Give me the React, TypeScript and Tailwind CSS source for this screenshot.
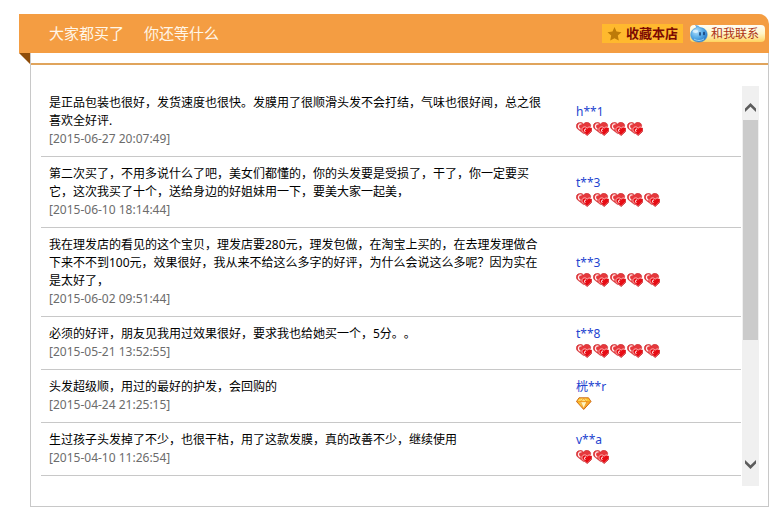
type Review = {
  text: string
  date: string
  user: string
  hearts: number
}

// hearts: 0 means the buyer has reached the diamond level
const reviews: Review[] = [
  {
    text: '是正品包装也很好，发货速度也很快。发膜用了很顺滑头发不会打结，气味也很好闻，总之很喜欢全好评.',
    date: '2015-06-27 20:07:49',
    user: 'h**1',
    hearts: 4,
  },
  {
    text: '第二次买了，不用多说什么了吧，美女们都懂的，你的头发要是受损了，干了，你一定要买它，这次我买了十个，送给身边的好姐妹用一下，要美大家一起美，',
    date: '2015-06-10 18:14:44',
    user: 't**3',
    hearts: 5,
  },
  {
    text: '我在理发店的看见的这个宝贝，理发店要280元，理发包做，在淘宝上买的，在去理发理做合下来不不到100元，效果很好，我从来不给这么多字的好评，为什么会说这么多呢？因为实在是太好了，',
    date: '2015-06-02 09:51:44',
    user: 't**3',
    hearts: 5,
  },
  {
    text: '必须的好评，朋友见我用过效果很好，要求我也给她买一个，5分。。',
    date: '2015-05-21 13:52:55',
    user: 't**8',
    hearts: 5,
  },
  {
    text: '头发超级顺，用过的最好的护发，会回购的',
    date: '2015-04-24 21:25:15',
    user: '桄**r',
    hearts: 0,
  },
  {
    text: '生过孩子头发掉了不少，也很干枯，用了这款发膜，真的改善不少，继续使用',
    date: '2015-04-10 11:26:54',
    user: 'v**a',
    hearts: 2,
  },
]

function Heart() {
  return (
    <svg width="16" height="14" viewBox="0 0 16 14">
      <path
        d="M7.6 11.6 1.4 6.8C-.2 5 .1 2.2 2 1 4 0 6.300.3 7.600 2 9 .2 11.300-.1 13.200 1c1.800 1.200 2 4 .2 5.800z"
        fill="#e6383c"
        stroke="#c8282c"
        strokeWidth=".6"
      />
      <path d="M5 1.900C2.200 1.900 1.300 5.200 4 7" fill="none" stroke="#ffeaea" strokeWidth="1.300" strokeLinecap="round" />
      <path
        d="M11.200 13.300 6.800 9.700C5.600 8.400 5.700 6.100 7.100 5.300c1.400-.8 3.100-.4 4.100.8 1-1.200 2.600-1.500 3.800-.6 1.200 1 1.200 2.900 0 4.200z"
        fill="#e80c14"
        stroke="#ffc4c4"
        strokeWidth=".9"
      />
      <path d="M7.600 10.400l3.600 3 3.900-3.600c.9-1 1-2.300.3-3.600" fill="none" stroke="#c4141a" strokeWidth=".9" />
      <path d="M9.800 6.900c-1.600-.1-1.900 1.700-.8 2.700" fill="none" stroke="#fff" strokeWidth="1" strokeLinecap="round" />
    </svg>
  )
}

function Diamond() {
  return (
    <svg width="16" height="14" viewBox="0 0 16 14">
      <path d="M3 .8h9.500L15 4.500 7.700 12.500.5 4.500z" fill="#ffc42a" />
      <path d="M4 5h6.800L7.700 11.500z" fill="#fff6c0" />
      <path d="M4.500 1.500h5.600L11 4H4.600z" fill="#ffe27a" />
      <path d="M1.500 4.200 3.500 1.500 5 4z" fill="#ffd95a" />
      <path d="M11 5h3.500L8.500 12z" fill="#fbab2c" />
      <path
        d="M.8 4.700h14M4.500 4.700l3.200-3.200 3.200 3.200M4.500 4.700l3.200 7M10.900 4.700l-3.200 7"
        fill="none"
        stroke="#e8861c"
        strokeWidth=".7"
      />
      <path d="M3 .8h9.500L15 4.500 7.700 12.500.5 4.500z" fill="none" stroke="#c8600c" strokeWidth=".9" />
    </svg>
  )
}

function Star() {
  return (
    <svg width="15" height="14" viewBox="0 0 14 14">
      <path d="M7 0l2 4.600 5 .6-3.700 3.400 1 5L7 11.200l-4.300 2.400 1-5L0 5.200l5-.6z" fill="#bd7a08" />
    </svg>
  )
}

function WangWang() {
  return (
    <svg width="18" height="18" viewBox="0 0 18 18">
      <defs>
        <radialGradient id="drop" cx=".35" cy=".35" r=".75">
          <stop offset="0" stopColor="#b5e0fa" />
          <stop offset=".5" stopColor="#5aaee8" />
          <stop offset="1" stopColor="#2474c4" />
        </radialGradient>
      </defs>
      <path
        d="M5.500.5c2.300.2 3.800 1 4.300 2.100 4.400.2 7.400 2.900 7.400 6.900 0 4.500-3.600 7.500-8.300 7.500S.7 14 .7 9.600C.7 6.300 2.800 3.900 6 3 6.800 2.200 6.500 1.300 5.500.5z"
        fill="url(#drop)"
        stroke="#3c8fd6"
        strokeWidth=".6"
      />
      <ellipse cx="5.500" cy="6.300" rx="2.800" ry="1.600" fill="#e3f5ff" opacity=".8" />
      <path d="M10 7.800v2.200M14 7.400v2.200" stroke="#0b2f66" strokeWidth="1.400" strokeLinecap="round" />
      <path d="M4 14c3 2 7 2 10-.2" fill="none" stroke="#9ad6f8" strokeWidth="1" />
    </svg>
  )
}

function Arrow({ d }: { d: string }) {
  return (
    <svg width="11" height="9" viewBox="0 0 11 9">
      <path d={d} fill="#5c5c5c" />
    </svg>
  )
}

function Header() {
  return (
    <header className="flex h-[39px] items-center justify-between rounded-tr-[10px] bg-[#f49d42] pl-[30px] pr-1">
      <h1 className="flex gap-5 text-[15px] text-[#fff6e8]">
        <span>大家都买了</span>
        <span>你还等什么</span>
      </h1>
      <div className="flex items-center gap-[7px]">
        <a href="#favorite" className="flex h-[19px] items-center gap-1 bg-[#ffb92e] px-[5px] text-[13px] font-bold text-[#7c0a02]">
          <Star />
          收藏本店
        </a>
        <a
          href="#contact"
          className="flex h-[17px] items-center gap-[3px] rounded-sm bg-linear-to-b from-[#fffdf5] via-[#fff6c8] to-[#ffd45c] pr-[6px] text-[12px] text-[#ad3216]"
        >
          <WangWang />
          和我联系
        </a>
      </div>
    </header>
  )
}

function ReviewRow({ review }: { review: Review }) {
  return (
    <tr className="border-b border-[#c8c8c8]">
      <td className="w-3/4 py-2 pl-2 pr-6 text-black">
        <p>{review.text}</p>
        <p className="text-[#6c6c6c]">[{review.date}]</p>
      </td>
      <td className="py-2 pl-[10px] align-middle">
        <a href="#buyer" className="block text-[#2343cf]">
          {review.user}
        </a>
        <div className="flex h-[18px] items-start gap-px pt-px">
          {review.hearts === 0 ? <Diamond /> : Array.from({ length: review.hearts }, (_, i) => <Heart key={i} />)}
        </div>
      </td>
    </tr>
  )
}

function ScrollBar() {
  return (
    <div className="flex w-[17px] flex-col bg-[#f0f0f0]">
      <button aria-label="向上滚动" className="flex h-[34px] items-center justify-center pt-2">
        <Arrow d="M5.500 0 11 5.500V9L5.500 3.800 0 9V5.500z" />
      </button>
      <div className="mx-px h-[220px] bg-[#cbcbcb]" />
      <button aria-label="向下滚动" className="mt-auto flex h-[44px] items-center justify-center">
        <Arrow d="M5.500 9 0 3.500V0l5.500 5.200L11 0v3.500z" />
      </button>
    </div>
  )
}

export default function App() {
  return (
    <div className="bg-white pl-[19px] pr-px pt-[14px] font-['Noto_Sans','Noto_Sans_CJK_SC',sans-serif] [text-spacing-trim:space-all]">
      <Header />
      <div className="flex">
        <svg width="11" height="11" viewBox="0 0 11 11" className="shrink-0">
          <path d="M0 0h11v11z" fill="#8f4c08" />
        </svg>
        <main className="flex-1 border-x border-b border-[#c8c8c8]">
          <div className="mt-[10px] h-[2px] bg-[#e0a45c]" />
          <div className="flex gap-px pb-5 pl-[10px] pr-[9px] pt-[21px]">
            <div className="flex-1 pb-[10px]">
              <table className="w-full table-fixed text-[12px] leading-[18px]">
                <tbody>
                  {reviews.map((review) => (
                    <ReviewRow key={review.date} review={review} />
                  ))}
                </tbody>
              </table>
            </div>
            <ScrollBar />
          </div>
        </main>
      </div>
    </div>
  )
}
